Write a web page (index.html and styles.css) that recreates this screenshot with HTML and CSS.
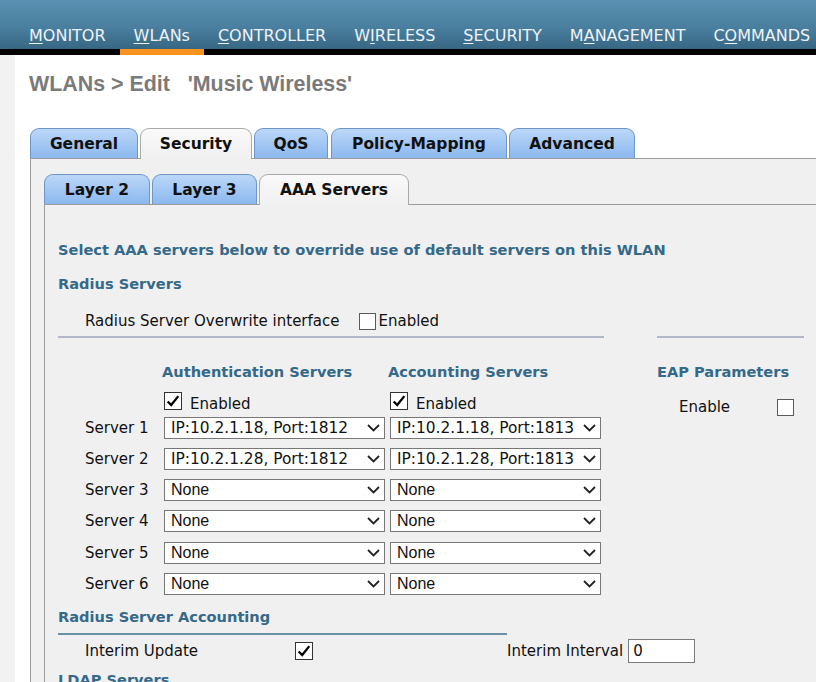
FILE: index.html
```html
<!DOCTYPE html>
<html lang="en">
<head>
<meta charset="utf-8">
<title>WLANs &gt; Edit</title>
<link rel="stylesheet" href="styles.css">
</head>
<body>
<header class="topbar">
  <nav class="nav">
    <a class="nav-item"><u>M</u>ONITOR</a>
    <a class="nav-item active"><u>W</u>LANs</a>
    <a class="nav-item"><u>C</u>ONTROLLER</a>
    <a class="nav-item">W<u>I</u>RELESS</a>
    <a class="nav-item"><u>S</u>ECURITY</a>
    <a class="nav-item">M<u>A</u>NAGEMENT</a>
    <a class="nav-item">C<u>O</u>MMANDS</a>
  </nav>
</header>
<div class="page">
  <aside class="strip"></aside>
  <main class="main">
    <h1 class="title">WLANs &gt; Edit &nbsp; 'Music Wireless'</h1>
    <div class="tabs">
      <div class="tab w-general">General</div>
      <div class="tab active w-security">Security</div>
      <div class="tab w-qos">QoS</div>
      <div class="tab w-policy">Policy-Mapping</div>
      <div class="tab w-advanced">Advanced</div>
    </div>
    <div class="panel">
      <div class="tabs">
        <div class="tab w-l2">Layer 2</div>
        <div class="tab w-l3">Layer 3</div>
        <div class="tab active w-aaa">AAA Servers</div>
      </div>
      <div class="subpanel">
        <h2 class="heading intro">Select AAA servers below to override use of default servers on this WLAN</h2>
        <h2 class="heading radius">Radius Servers</h2>
        <div class="overwrite-row">
          <span class="ow-label">Radius Server Overwrite interface</span>
          <span class="cb"></span>
          <span class="ow-enabled">Enabled</span>
        </div>
        <div class="servers-area">
          <div class="servers-col">
            <div class="sep"></div>
            <div class="srow hdr-row">
              <span></span>
              <h3 class="heading col-h">Authentication Servers</h3>
              <h3 class="heading col-h">Accounting Servers</h3>
            </div>
            <div class="srow en-row">
              <span></span>
              <label class="cb-label"><span class="cb checked"><svg viewBox="0 0 18 18" width="16" height="16"><path d="M3 9.5 L7 13.5 L15 3.5" fill="none" stroke="#000" stroke-width="2.6"/></svg></span>Enabled</label>
              <label class="cb-label"><span class="cb checked"><svg viewBox="0 0 18 18" width="16" height="16"><path d="M3 9.5 L7 13.5 L15 3.5" fill="none" stroke="#000" stroke-width="2.6"/></svg></span>Enabled</label>
            </div>
            <div class="srow sv-row first">
              <span class="sv-label">Server 1</span>
              <div class="select s1"><span>IP:10.2.1.18, Port:1812</span><svg class="chev" viewBox="0 0 13 8" width="13" height="8"><path d="M1 1 L6.5 6.5 L12 1" fill="none" stroke="#222" stroke-width="1.8"/></svg></div>
              <div class="select s2"><span>IP:10.2.1.18, Port:1813</span><svg class="chev" viewBox="0 0 13 8" width="13" height="8"><path d="M1 1 L6.5 6.5 L12 1" fill="none" stroke="#222" stroke-width="1.8"/></svg></div>
            </div>
            <div class="srow sv-row">
              <span class="sv-label">Server 2</span>
              <div class="select s1"><span>IP:10.2.1.28, Port:1812</span><svg class="chev" viewBox="0 0 13 8" width="13" height="8"><path d="M1 1 L6.5 6.5 L12 1" fill="none" stroke="#222" stroke-width="1.8"/></svg></div>
              <div class="select s2"><span>IP:10.2.1.28, Port:1813</span><svg class="chev" viewBox="0 0 13 8" width="13" height="8"><path d="M1 1 L6.5 6.5 L12 1" fill="none" stroke="#222" stroke-width="1.8"/></svg></div>
            </div>
            <div class="srow sv-row">
              <span class="sv-label">Server 3</span>
              <div class="select s1"><span class="none">None</span><svg class="chev" viewBox="0 0 13 8" width="13" height="8"><path d="M1 1 L6.5 6.5 L12 1" fill="none" stroke="#222" stroke-width="1.8"/></svg></div>
              <div class="select s2"><span class="none">None</span><svg class="chev" viewBox="0 0 13 8" width="13" height="8"><path d="M1 1 L6.5 6.5 L12 1" fill="none" stroke="#222" stroke-width="1.8"/></svg></div>
            </div>
            <div class="srow sv-row">
              <span class="sv-label">Server 4</span>
              <div class="select s1"><span class="none">None</span><svg class="chev" viewBox="0 0 13 8" width="13" height="8"><path d="M1 1 L6.5 6.5 L12 1" fill="none" stroke="#222" stroke-width="1.8"/></svg></div>
              <div class="select s2"><span class="none">None</span><svg class="chev" viewBox="0 0 13 8" width="13" height="8"><path d="M1 1 L6.5 6.5 L12 1" fill="none" stroke="#222" stroke-width="1.8"/></svg></div>
            </div>
            <div class="srow sv-row wide">
              <span class="sv-label">Server 5</span>
              <div class="select s1"><span class="none">None</span><svg class="chev" viewBox="0 0 13 8" width="13" height="8"><path d="M1 1 L6.5 6.5 L12 1" fill="none" stroke="#222" stroke-width="1.8"/></svg></div>
              <div class="select s2"><span class="none">None</span><svg class="chev" viewBox="0 0 13 8" width="13" height="8"><path d="M1 1 L6.5 6.5 L12 1" fill="none" stroke="#222" stroke-width="1.8"/></svg></div>
            </div>
            <div class="srow sv-row">
              <span class="sv-label">Server 6</span>
              <div class="select s1"><span class="none">None</span><svg class="chev" viewBox="0 0 13 8" width="13" height="8"><path d="M1 1 L6.5 6.5 L12 1" fill="none" stroke="#222" stroke-width="1.8"/></svg></div>
              <div class="select s2"><span class="none">None</span><svg class="chev" viewBox="0 0 13 8" width="13" height="8"><path d="M1 1 L6.5 6.5 L12 1" fill="none" stroke="#222" stroke-width="1.8"/></svg></div>
            </div>
          </div>
          <div class="eap-col">
            <div class="sep"></div>
            <h3 class="heading eap-h">EAP Parameters</h3>
            <div class="eap-row">
              <span>Enable</span>
              <span class="cb"></span>
            </div>
          </div>
        </div>
        <h2 class="heading acct-h">Radius Server Accounting</h2>
        <div class="acct-line"></div>
        <div class="interim-row">
          <span class="iu-label">Interim Update</span>
          <span class="iu-cb"><span class="cb checked"><svg viewBox="0 0 18 18" width="16" height="16"><path d="M3 9.5 L7 13.5 L15 3.5" fill="none" stroke="#000" stroke-width="2.6"/></svg></span></span>
          <span class="ii-label">Interim Interval</span>
          <span class="input">0</span>
        </div>
        <h2 class="heading ldap-h">LDAP Servers</h2>
      </div>
    </div>
  </main>
</div>
</body>
</html>
```

FILE: styles.css
```css
html, body {
  margin: 0;
  padding: 0;
  height: 682px;
  overflow: hidden;
  background: #ffffff;
  font-family: "DejaVu Sans", Verdana, sans-serif;
  color: #111;
}

* { box-sizing: border-box; }

/* top navigation */
.topbar {
  height: 55px;
  background: linear-gradient(to bottom, #5a91b2 0px, #497e9e 28px, #376783 49px, #000 49px, #000 55px);
}
.nav {
  display: flex;
  padding-left: 15px;
}
.nav-item {
  height: 55px;
  padding: 11px 14px 0;
  line-height: 49px;
  border-bottom: 6px solid transparent;
  color: #eef3f7;
  font-size: 16px;
  text-decoration: none;
  white-space: nowrap;
}
.nav-item.active { border-bottom-color: #f7931e; }
.nav-item u { text-underline-offset: 2px; }

/* page */
.page {
  display: flex;
  height: 627px;
}
.strip {
  width: 15px;
  flex: none;
  background: #f2f2f2;
}
.main {
  flex: 1;
  min-width: 0;
}
.title {
  margin: 17px 0 0 14px;
  height: 24px;
  line-height: 24px;
  font: bold 21.4px "Liberation Sans", Arial, sans-serif;
  color: #7a7a7a;
  white-space: nowrap;
}

/* tabs */
.tabs {
  display: flex;
  align-items: flex-end;
  gap: 2px;
  position: relative;
  z-index: 1;
}
.main > .tabs { margin: 32px 0 0 15px; }
.tab {
  height: 30px;
  border: 1px solid #6e97c8;
  border-bottom: none;
  border-radius: 9px 9px 0 0;
  background: linear-gradient(to bottom, #bcd7f8, #8bb8ef);
  display: flex;
  align-items: center;
  justify-content: center;
  font-weight: bold;
  font-size: 15.5px;
  color: #111;
}
.tab.active {
  height: 31px;
  margin-bottom: -1px;
  padding-bottom: 1px;
  background: linear-gradient(to bottom, #f9f9f9, #f0f0f0);
  border-color: #a9a9a9;
}
.w-general { width: 108px; }
.w-security { width: 112px; }
.w-qos { width: 74px; }
.w-policy { width: 176px; margin-left: 1px; }
.w-advanced { width: 126px; }
.w-l2 { width: 106px; }
.w-l3 { width: 105px; }
.w-aaa { width: 150px; }

.panel {
  margin-left: 15px;
  border-top: 1px solid #9c9c9c;
  border-left: 1px solid #9c9c9c;
  background: #f0f0f0;
  padding: 15px 0 0 13px;
  height: 524px;
  overflow: hidden;
}
.subpanel {
  border-top: 1px solid #9c9c9c;
  border-left: 1px solid #9c9c9c;
  background: #f0f0f0;
  padding: 0 0 0 13px;
  height: 490px;
  font-size: 15px;
}

.heading {
  margin: 0;
  font-size: 14.6px;
  font-weight: bold;
  color: #35698a;
  height: 20px;
  line-height: 20px;
  white-space: nowrap;
}
.intro { margin-top: 35px; }
.radius { margin-top: 14px; }

.overwrite-row {
  display: flex;
  align-items: center;
  height: 22px;
  margin-top: 16px;
  padding-left: 27px;
}
.ow-label { margin-right: 20px; }
.ow-enabled { margin-left: 2px; }

.cb {
  display: inline-flex;
  align-items: center;
  justify-content: center;
  width: 17px;
  height: 17px;
  border: 1px solid #5a5a5a;
  background: #fff;
  flex: none;
}
.cb.checked {
  width: 18px;
  height: 18px;
  border-color: #333;
}

.servers-area {
  display: flex;
  margin-top: 4px;
}
.servers-col { width: 546px; }
.eap-col { width: 147px; margin-left: 53px; }
.sep {
  height: 2px;
  background: #b3b8c8;
}

.srow {
  display: grid;
  grid-template-columns: 106px 226px 211px;
  align-items: center;
}
.hdr-row { height: 20px; margin-top: 24px; }
.col-h { margin-left: -2px; }
.en-row { height: 20px; margin-top: 10px; }
.cb-label {
  display: flex;
  align-items: center;
  gap: 8px;
  padding-top: 3px;
}
.cb-label .cb { margin-top: -6px; }
.sv-row { height: 22px; margin-top: 9px; }
.sv-row.first { margin-top: 5px; }
.sv-row.wide { margin-top: 10px; }
.sv-label { padding-left: 27px; }

.select {
  height: 22px;
  border: 1px solid #777;
  background: #fff;
  display: flex;
  align-items: center;
  justify-content: space-between;
  padding: 0 4px 0 6px;
  white-space: nowrap;
  font-size: 15.4px;
}
.select.s1 { width: 221px; }
.select.s2 { width: 211px; }
.select .none { font-family: "Liberation Sans", Arial, sans-serif; font-size: 16px; }
.chev { flex: none; }

.eap-h { margin-top: 24px; }
.eap-row {
  display: flex;
  align-items: center;
  height: 20px;
  margin-top: 15px;
  padding-left: 22px;
}
.eap-row .cb { margin-left: auto; margin-right: 10px; }

.acct-h { margin-top: 12px; }
.acct-line {
  width: 449px;
  height: 2px;
  margin-top: 6px;
  background: #6b91a9;
}
.interim-row {
  display: flex;
  align-items: center;
  height: 24px;
  margin-top: 4px;
  padding-left: 27px;
}
.iu-label { width: 210px; }
.iu-cb { width: 212px; display: flex; }
.ii-label { margin-right: 5px; }
.input {
  width: 67px;
  height: 24px;
  border: 1px solid #7a7a7a;
  background: #fff;
  padding-left: 4px;
  line-height: 22px;
}
.ldap-h { margin-top: 7px; }
```
